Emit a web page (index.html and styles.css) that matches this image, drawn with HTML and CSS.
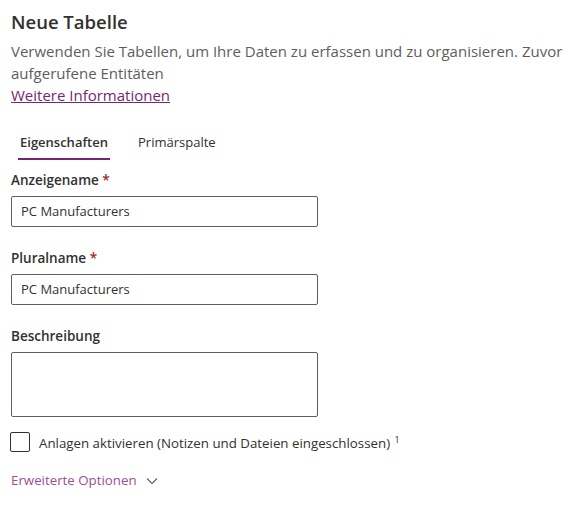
FILE: index.html
```html
<!DOCTYPE html>
<html lang="de">
<head>
<meta charset="utf-8">
<link rel="stylesheet" href="styles.css">
</head>
<body>
<div class="panel">
  <h1 class="title">Neue Tabelle</h1>
  <p class="desc">Verwenden Sie Tabellen, um Ihre Daten zu erfassen und zu organisieren. Zuvor aufgerufene Entitäten<br><a class="link" href="#">Weitere Informationen</a></p>
  <div class="tabs">
    <div class="tab active">Eigenschaften</div>
    <div class="tab">Primärspalte</div>
  </div>
  <div class="field">
    <label class="label">Anzeigename <span class="req">*</span></label>
    <div class="input">PC Manufacturers</div>
  </div>
  <div class="field">
    <label class="label">Pluralname <span class="req">*</span></label>
    <div class="input">PC Manufacturers</div>
  </div>
  <div class="field">
    <label class="label">Beschreibung</label>
    <div class="textarea"></div>
  </div>
  <div class="check">
    <span class="box"></span>
    <span class="check-label">Anlagen aktivieren (Notizen und Dateien eingeschlossen) <sup class="sup">1</sup></span>
  </div>
  <div class="advanced">
    <span>Erweiterte Optionen</span>
    <svg class="chev" width="12" height="8" viewBox="0 0 12 8"><path d="M1 1.5 L6 6.5 L11 1.5" fill="none" stroke="#605e5c" stroke-width="1.1"/></svg>
  </div>
</div>
</body>
</html>
```
FILE: styles.css
```css
* { box-sizing: border-box; }
body {
  margin: 0;
  background: #fff;
  font-family: "Open Sans", "Noto Sans", sans-serif;
  color: #323130;
}
.panel {
  padding: 8px 10px 0 11px;
  width: 588px;
}
.title {
  margin: 0;
  font-size: 18.5px;
  font-weight: 600;
  line-height: 28px;
  color: #323130;
}
.desc {
  margin: 4px 0 0;
  font-size: 15px;
  line-height: 22px;
  color: #605e5c;
}
.link {
  color: #742774;
  text-decoration: underline;
}
.tabs {
  display: flex;
  gap: 26px;
  margin-top: 24px;
  padding-left: 7px;
}
.tab {
  font-size: 13px;
  line-height: 20px;
  padding: 2px 2px 6px;
  color: #323130;
}
.tab.active {
  font-weight: 600;
  border-bottom: 2px solid #742774;
}
.field {
  margin-top: 10px;
  width: 307px;
}
.field + .field { margin-top: 21px; }
.label {
  display: block;
  font-size: 13.5px;
  font-weight: 600;
  line-height: 20px;
  margin-bottom: 6px;
}
.req { color: #a4262c; }
.input {
  height: 31px;
  border: 1px solid #605e5c;
  border-radius: 2px;
  padding: 0 9px;
  font-size: 13px;
  line-height: 29px;
}
.textarea {
  height: 65px;
  border: 1px solid #605e5c;
  border-radius: 2px;
}
.check {
  display: flex;
  align-items: center;
  gap: 9px;
  margin-top: 15px;
  margin-left: -1px;
}
.box {
  width: 20px;
  height: 20px;
  border: 1px solid #323130;
  border-radius: 2px;
}
.check-label {
  font-size: 13.3px;
  color: #323130;
}
.sup { font-size: 9px; vertical-align: 5px; margin-left: 1px; }
.advanced {
  display: flex;
  align-items: center;
  gap: 9px;
  margin-top: 19px;
  color: #9b4f96;
  font-size: 13.3px;
}
.chev { margin-top: 1px; }
```
